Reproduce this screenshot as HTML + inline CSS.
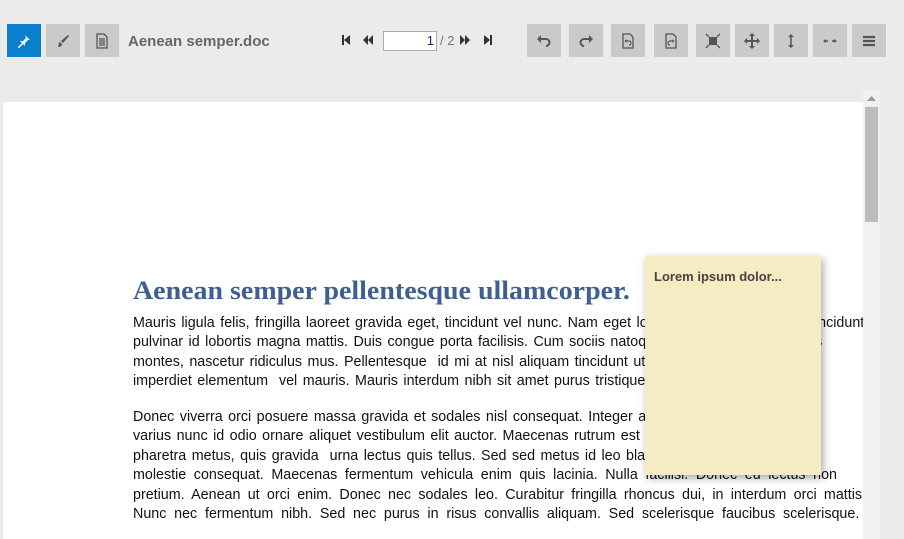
<!DOCTYPE html>
<html><head><meta charset="utf-8"><style>
*{margin:0;padding:0;box-sizing:border-box}
body{width:904px;height:539px;background:#ebebeb;position:relative;overflow:hidden;font-family:"Liberation Sans",Arial,sans-serif}
.b{position:absolute;top:24px;width:34px;height:33px;background:#cacaca;display:flex;align-items:center;justify-content:center}
.b svg{display:block}
.title{position:absolute;left:128px;top:33px;font-size:15px;font-weight:bold;color:#666}
.nav{position:absolute;top:34px}
.inp{position:absolute;left:383px;top:31px;width:54px;height:20px;background:#fff;border:1px solid #aaa;font-size:13px;color:#2a1a6a;text-align:right;padding-right:2px;line-height:18px}
.of{position:absolute;left:440px;top:33px;font-size:13px;color:#777}
.page{position:absolute;left:3px;top:102px;width:860px;height:437px;background:#fff;overflow:hidden}
.h{position:absolute;left:130px;top:174px;font-family:"Liberation Serif",serif;font-weight:bold;font-size:26px;color:#3f5f91;white-space:nowrap;transform:scaleX(1.075);transform-origin:left}
.p{position:absolute;left:130px;width:900px;font-size:14.3px;color:#111;line-height:19.4px;white-space:nowrap;word-spacing:1.5px}
.sb{position:absolute;left:863px;top:90px;width:17px;height:449px;background:#f1f1f1}
.th{position:absolute;left:865px;top:107px;width:13px;height:115px;background:#bcbcbc}
.note{position:absolute;left:645px;top:256px;width:176px;height:219px;background:#f7ebc4;box-shadow:2px 3px 8px rgba(0,0,0,.35);font-size:13px;font-weight:bold;color:#444;padding:13px 0 0 9px}
</style></head><body>
<div class="b" style="left:7px;background:#0a7fcb"><svg width="16" height="16" viewBox="0 0 16 16"><path d="M9 2l5 5-2 0-3 3 0 3-2-2-4 4-1 0 0-1 4-4-2-2 3 0 3-3z" fill="#fff"/></svg></div>
<div class="b" style="left:46px"><svg width="16" height="16" viewBox="0 0 16 16"><path d="M13 2l1 1-6 7-2-2z" fill="#555"/><path d="M5 9l2 2c0 2-2 3-4 3 1-1 0-4 2-5z" fill="#555"/></svg></div>
<div class="b" style="left:85px"><svg width="14" height="16" viewBox="0 0 14 16"><path d="M2 1h7l3 3v11H2z" fill="none" stroke="#555" stroke-width="1.3"/><path d="M4 6h6M4 8h6M4 10h6M4 12h6" stroke="#555" stroke-width="1.2"/></svg></div>
<div class="title">Aenean semper.doc</div>
<svg class="nav" style="left:341px" width="10" height="12" viewBox="0 0 10 12"><rect x="1" y="1" width="2" height="10" fill="#333"/><path d="M9 1v10L3 6z" fill="#333"/></svg>
<svg class="nav" style="left:362px" width="12" height="12" viewBox="0 0 12 12"><path d="M6 1v10L1 6zM11 1v10L6 6z" fill="#333"/></svg>
<div class="inp">1</div>
<div class="of">/ 2</div>
<svg class="nav" style="left:459px" width="12" height="12" viewBox="0 0 12 12"><path d="M1 1v10l5-5zM6 1v10l5-5z" fill="#333"/></svg>
<svg class="nav" style="left:483px" width="10" height="12" viewBox="0 0 10 12"><path d="M1 1v10l6-5z" fill="#333"/><rect x="7" y="1" width="2" height="10" fill="#333"/></svg>
<div class="b" style="left:527px"><svg width="16" height="16" viewBox="0 0 16 16"><path d="M4 6h6a3.5 3.5 0 0 1 0 7" fill="none" stroke="#555" stroke-width="2"/><path d="M1 6l4-4v8z" fill="#555"/></svg></div>
<div class="b" style="left:569px"><svg width="16" height="16" viewBox="0 0 16 16"><path d="M12 6H6a3.5 3.5 0 0 0 0 7" fill="none" stroke="#555" stroke-width="2"/><path d="M15 6l-4-4v8z" fill="#555"/></svg></div>
<div class="b" style="left:611px"><svg width="14" height="16" viewBox="0 0 14 16"><path d="M2 1h7l3 3v11H2z" fill="none" stroke="#555" stroke-width="1.3"/><path d="M5 8h3a2 2 0 0 1 0 4" fill="none" stroke="#555" stroke-width="1.2"/><path d="M3.5 8l2-2v4z" fill="#555"/></svg></div>
<div class="b" style="left:654px"><svg width="14" height="16" viewBox="0 0 14 16"><path d="M2 1h7l3 3v11H2z" fill="none" stroke="#555" stroke-width="1.3"/><path d="M9 8H6a2 2 0 0 0 0 4" fill="none" stroke="#555" stroke-width="1.2"/><path d="M10.5 8l-2-2v4z" fill="#555"/></svg></div>
<div class="b" style="left:696px"><svg width="16" height="16" viewBox="0 0 16 16"><rect x="4" y="4" width="8" height="8" fill="#555"/><path d="M1 1l3 3M15 1l-3 3M1 15l3-3M15 15l-3-3" stroke="#555" stroke-width="1.3"/></svg></div>
<div class="b" style="left:735px"><svg width="16" height="16" viewBox="0 0 16 16"><path d="M8 1v14M1 8h14" stroke="#555" stroke-width="2"/><path d="M8 0l3 3H5zM8 16l3-3H5zM0 8l3 3V5zM16 8l-3 3V5z" fill="#555"/></svg></div>
<div class="b" style="left:774px"><svg width="8" height="16" viewBox="0 0 8 16"><path d="M4 3v10" stroke="#555" stroke-width="1.5"/><path d="M4 1l3 3H1zM4 15l3-3H1z" fill="#555"/></svg></div>
<div class="b" style="left:813px"><svg width="16" height="8" viewBox="0 0 16 8"><path d="M3 4h3M10 4h3" stroke="#555" stroke-width="1.5"/><path d="M1 4l3-2v4zM15 4l-3-2v4z" fill="#555"/></svg></div>
<div class="b" style="left:852px"><svg width="16" height="14" viewBox="0 0 16 14"><path d="M2 3h12M2 7h12M2 11h12" stroke="#555" stroke-width="2.2"/></svg></div>

<div class="page">
<div class="h">Aenean semper pellentesque ullamcorper.</div>
<div class="p" style="top:212px">
<div>Mauris ligula felis, fringilla laoreet gravida eget, tincidunt vel nunc. Nam eget lorem ac ipsum adipiscing tincidunt</div>
<div>pulvinar id lobortis magna mattis. Duis congue porta facilisis. Cum sociis natoque penatibus et magnis dis</div>
<div>montes, nascetur ridiculus mus. Pellentesque&nbsp; id mi at nisl aliquam tincidunt ut sit amet justo ut</div>
<div>imperdiet elementum&nbsp; vel mauris. Mauris interdum nibh sit amet purus tristique, id porta non dictum</div>
</div>
<div class="p" style="top:306px">
<div>Donec viverra orci posuere massa gravida et sodales nisl consequat. Integer at nisl vel pulvinar</div>
<div>varius nunc id odio ornare aliquet vestibulum elit auctor. Maecenas rutrum est quis vehicula, sed</div>
<div>pharetra metus, quis gravida&nbsp; urna lectus quis tellus. Sed sed metus id leo blandit laoreet et</div>
<div style="word-spacing:3.6px">molestie consequat. Maecenas fermentum vehicula enim quis lacinia. Nulla facilisi. Donec eu lectus non</div>
<div style="word-spacing:3.3px">pretium. Aenean ut orci enim. Donec nec sodales leo. Curabitur fringilla rhoncus dui, in interdum orci mattis</div>
<div style="word-spacing:3.8px">Nunc nec fermentum nibh. Sed nec purus in risus convallis aliquam. Sed scelerisque faucibus scelerisque.</div>
</div>
</div>
<div class="sb"></div>
<svg style="position:absolute;left:867px;top:96px" width="9" height="5" viewBox="0 0 9 5"><path d="M4.5 0L9 5H0z" fill="#999"/></svg>
<div class="th"></div>
<div class="note">Lorem ipsum dolor...</div>
</body></html>
